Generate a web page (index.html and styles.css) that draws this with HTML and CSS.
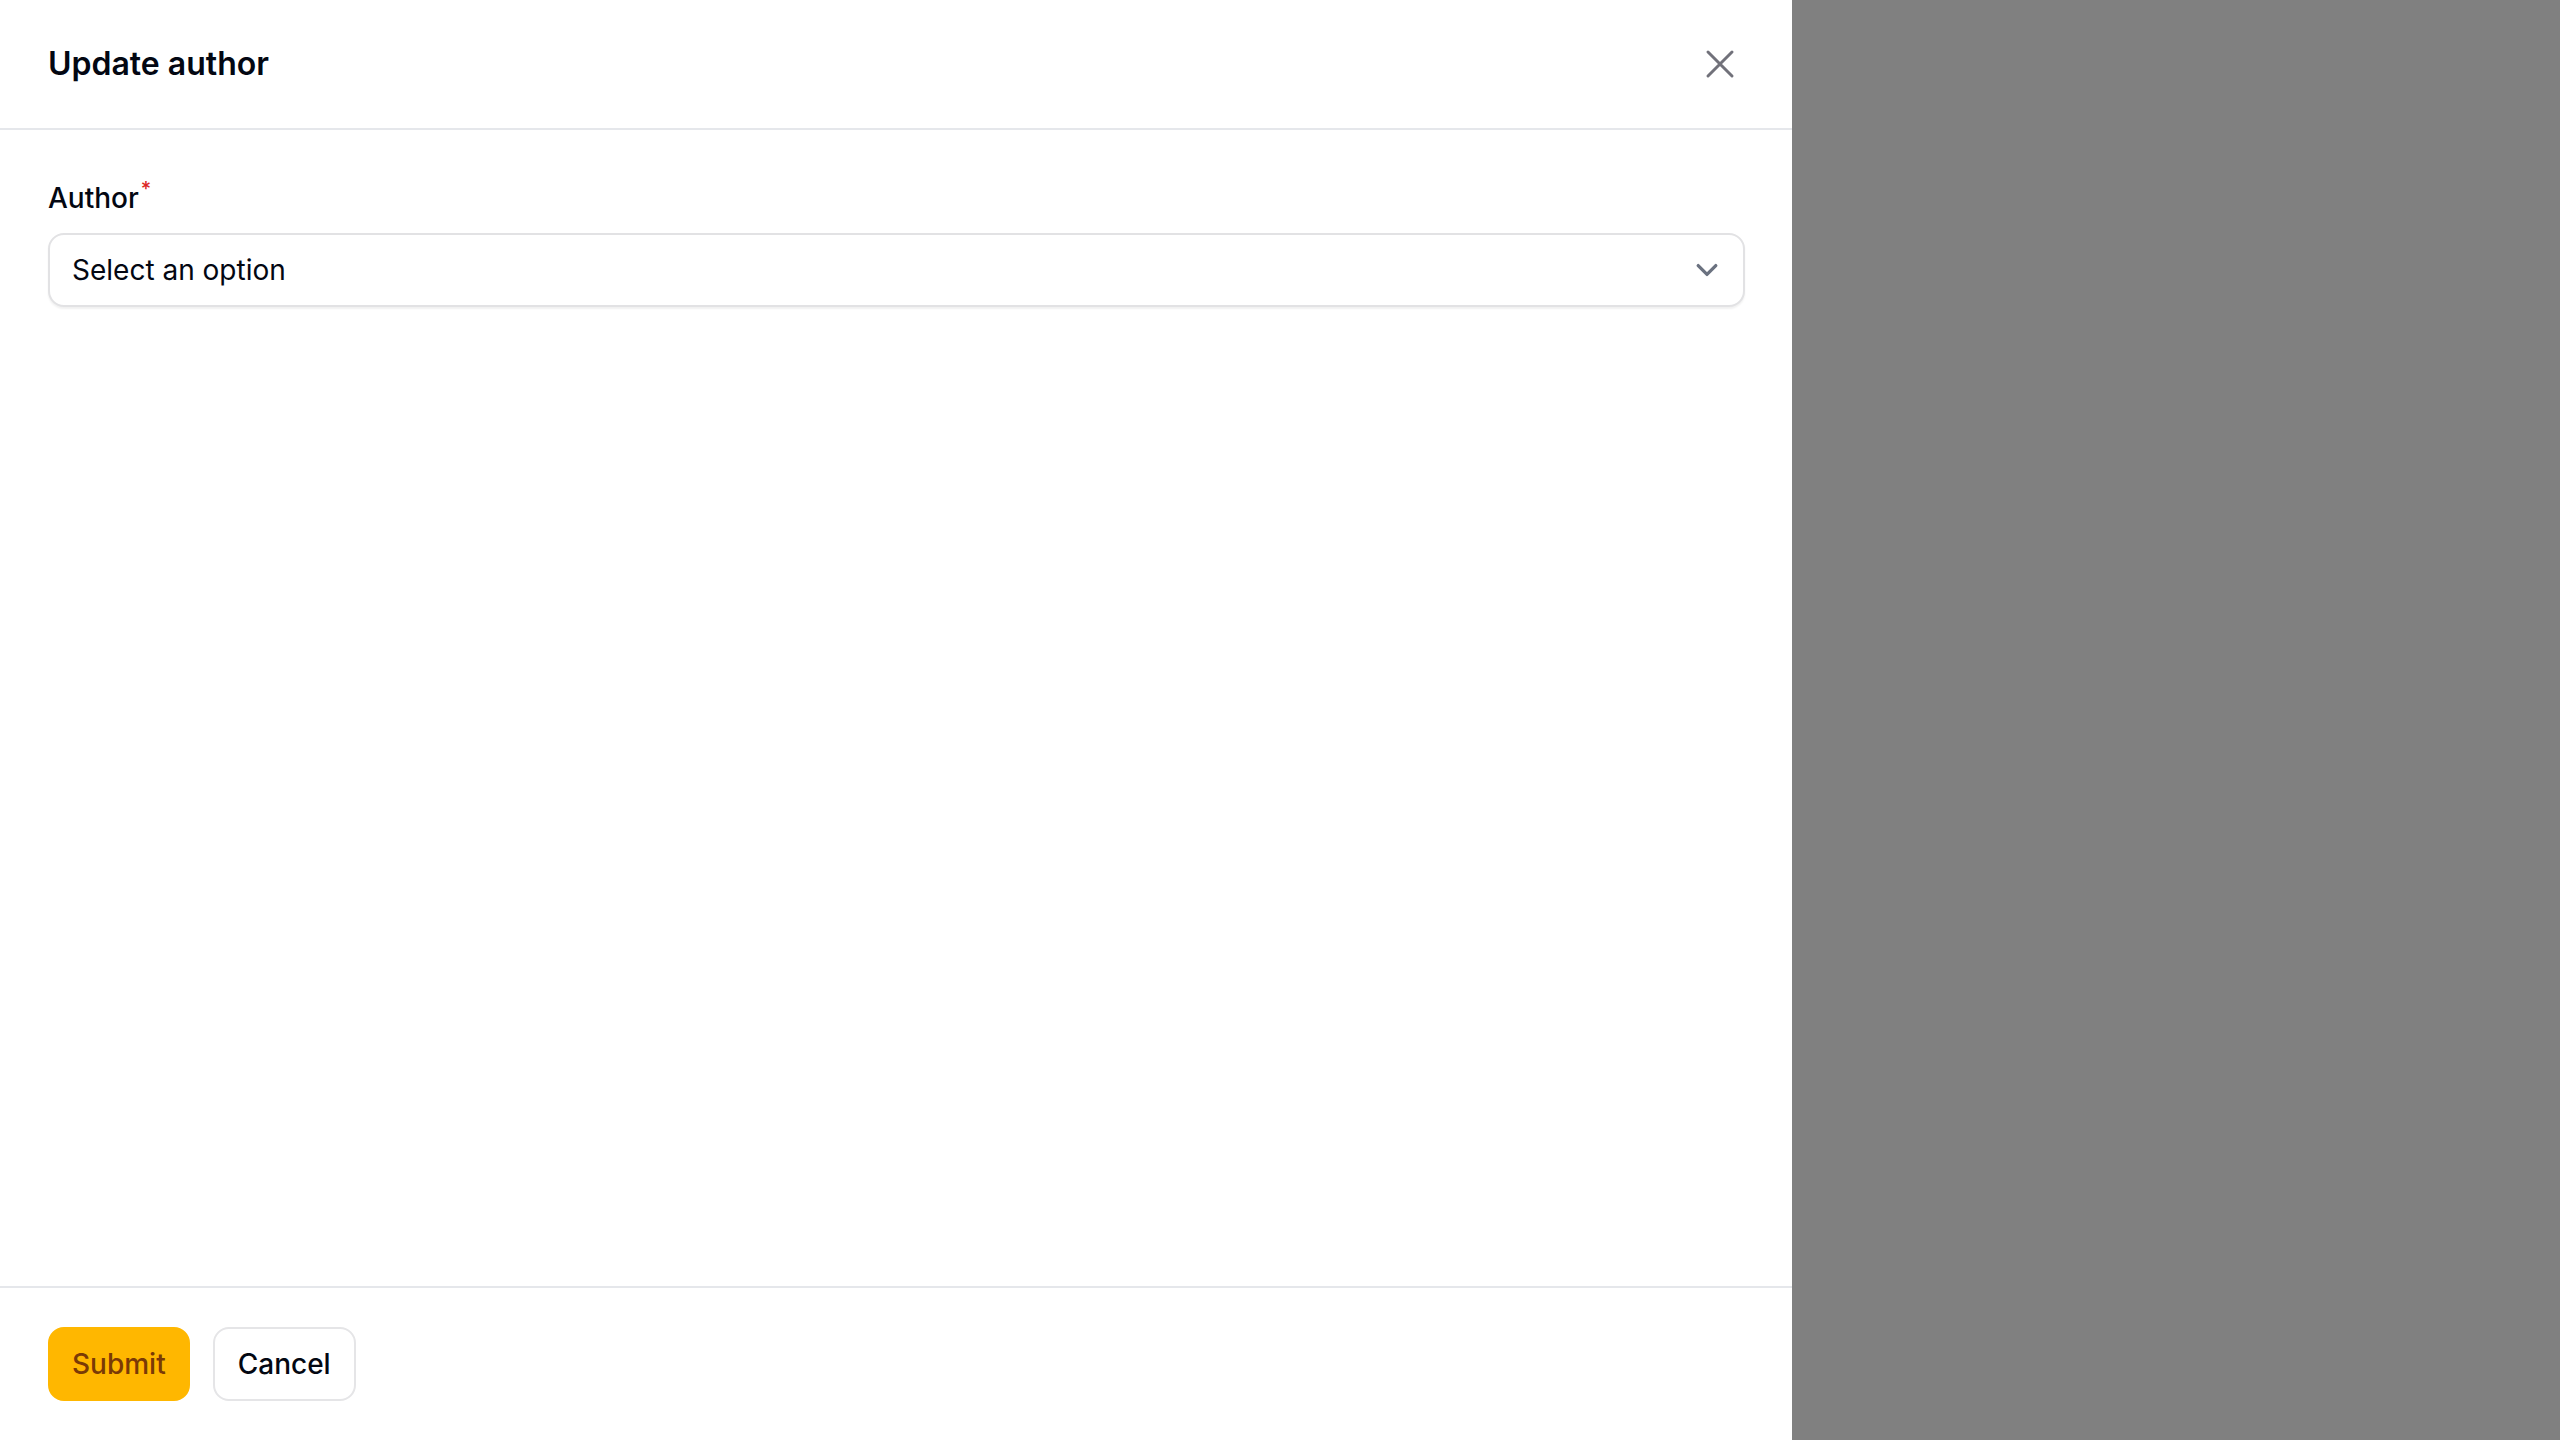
FILE: index.html
```html
<!DOCTYPE html>
<html lang="en">
<head>
<meta charset="utf-8">
<title>Update author</title>
<link rel="stylesheet" href="styles.css">
</head>
<body>
<div class="layout">
  <section class="panel">
    <header class="panel-header">
      <h2 class="panel-title">Update author</h2>
      <button class="close-btn" type="button" aria-label="Close">
        <svg viewBox="0 0 24 24" width="48" height="48" fill="none" stroke="currentColor" stroke-width="1.5" stroke-linecap="round" stroke-linejoin="round"><path d="M6 18 18 6M6 6l12 12"/></svg>
      </button>
    </header>
    <div class="panel-body">
      <div class="field">
        <label class="field-label">Author<sup class="required">*</sup></label>
        <div class="select">
          <span class="select-text">Select an option</span>
          <svg class="chevron" viewBox="0 0 20 20" width="44" height="44" fill="none" stroke="#6b7280" stroke-width="1.5" stroke-linecap="round" stroke-linejoin="round"><path d="M6 8l4 4 4-4"/></svg>
        </div>
      </div>
    </div>
    <footer class="panel-footer">
      <button class="btn btn-primary" type="button">Submit</button>
      <button class="btn btn-secondary" type="button">Cancel</button>
    </footer>
  </section>
  <div class="overlay"></div>
</div>
</body>
</html>
```

FILE: styles.css
```css
* { box-sizing: border-box; }
html, body { margin: 0; padding: 0; }
body {
  font-family: Inter, "Noto Sans", "Liberation Sans", sans-serif;
  color: #030712;
  background: #808080;
}
.layout {
  display: flex;
  width: 2560px;
  height: 1440px;
}
.panel {
  width: 1792px;
  height: 1440px;
  background: #ffffff;
  display: flex;
  flex-direction: column;
}
.panel-header {
  display: flex;
  align-items: center;
  justify-content: space-between;
  padding: 40px 48px;
  border-bottom: 2px solid #e5e7eb;
}
.panel-title {
  margin: 0;
  font-size: 32px;
  line-height: 48px;
  font-weight: 600;
  color: #030712;
}
.close-btn {
  width: 48px;
  height: 48px;
  padding: 0;
  border: 0;
  background: transparent;
  color: #71717a;
  display: flex;
  align-items: center;
  justify-content: center;
}
.close-btn svg { display: block; }
.panel-body {
  flex: 1;
  padding: 48px 47px 0 48px;
}
.field {
  display: flex;
  flex-direction: column;
  gap: 15px;
}
.field-label {
  font-size: 28px;
  line-height: 40px;
  font-weight: 500;
  color: #030712;
}
.required {
  color: #dc2626;
  font-size: 20px;
  font-weight: 500;
  vertical-align: 12px;
  line-height: 0;
  margin-left: 2px;
}
.select {
  height: 74px;
  border: 2px solid #e2e2e4;
  border-radius: 16px;
  box-shadow: 0 2px 2px rgba(0, 0, 0, 0.06);
  display: flex;
  align-items: center;
  justify-content: space-between;
  padding: 0 14px 0 22px;
  background: #ffffff;
}
.select-text {
  font-size: 28px;
  line-height: 48px;
  color: #030712;
}
.chevron { display: block; }
.panel-footer {
  border-top: 2px solid #e5e7eb;
  padding: 39px 48px;
  display: flex;
  gap: 23px;
}
.btn {
  height: 74px;
  padding: 0 24px;
  border-radius: 16px;
  font-family: Inter, "Noto Sans", "Liberation Sans", sans-serif;
  font-size: 28px;
  font-weight: 500;
  line-height: 40px;
  display: flex;
  align-items: center;
  justify-content: center;
}
.btn-primary {
  background: #ffb700;
  color: #7a3a06;
  border: 2px solid #ffb700;
  padding: 0 22px;
}
.btn-secondary {
  background: #ffffff;
  color: #030712;
  border: 2px solid #e5e5e7;
  padding: 0 23px;
}
.overlay {
  flex: 1;
  background: #808080;
}
```
